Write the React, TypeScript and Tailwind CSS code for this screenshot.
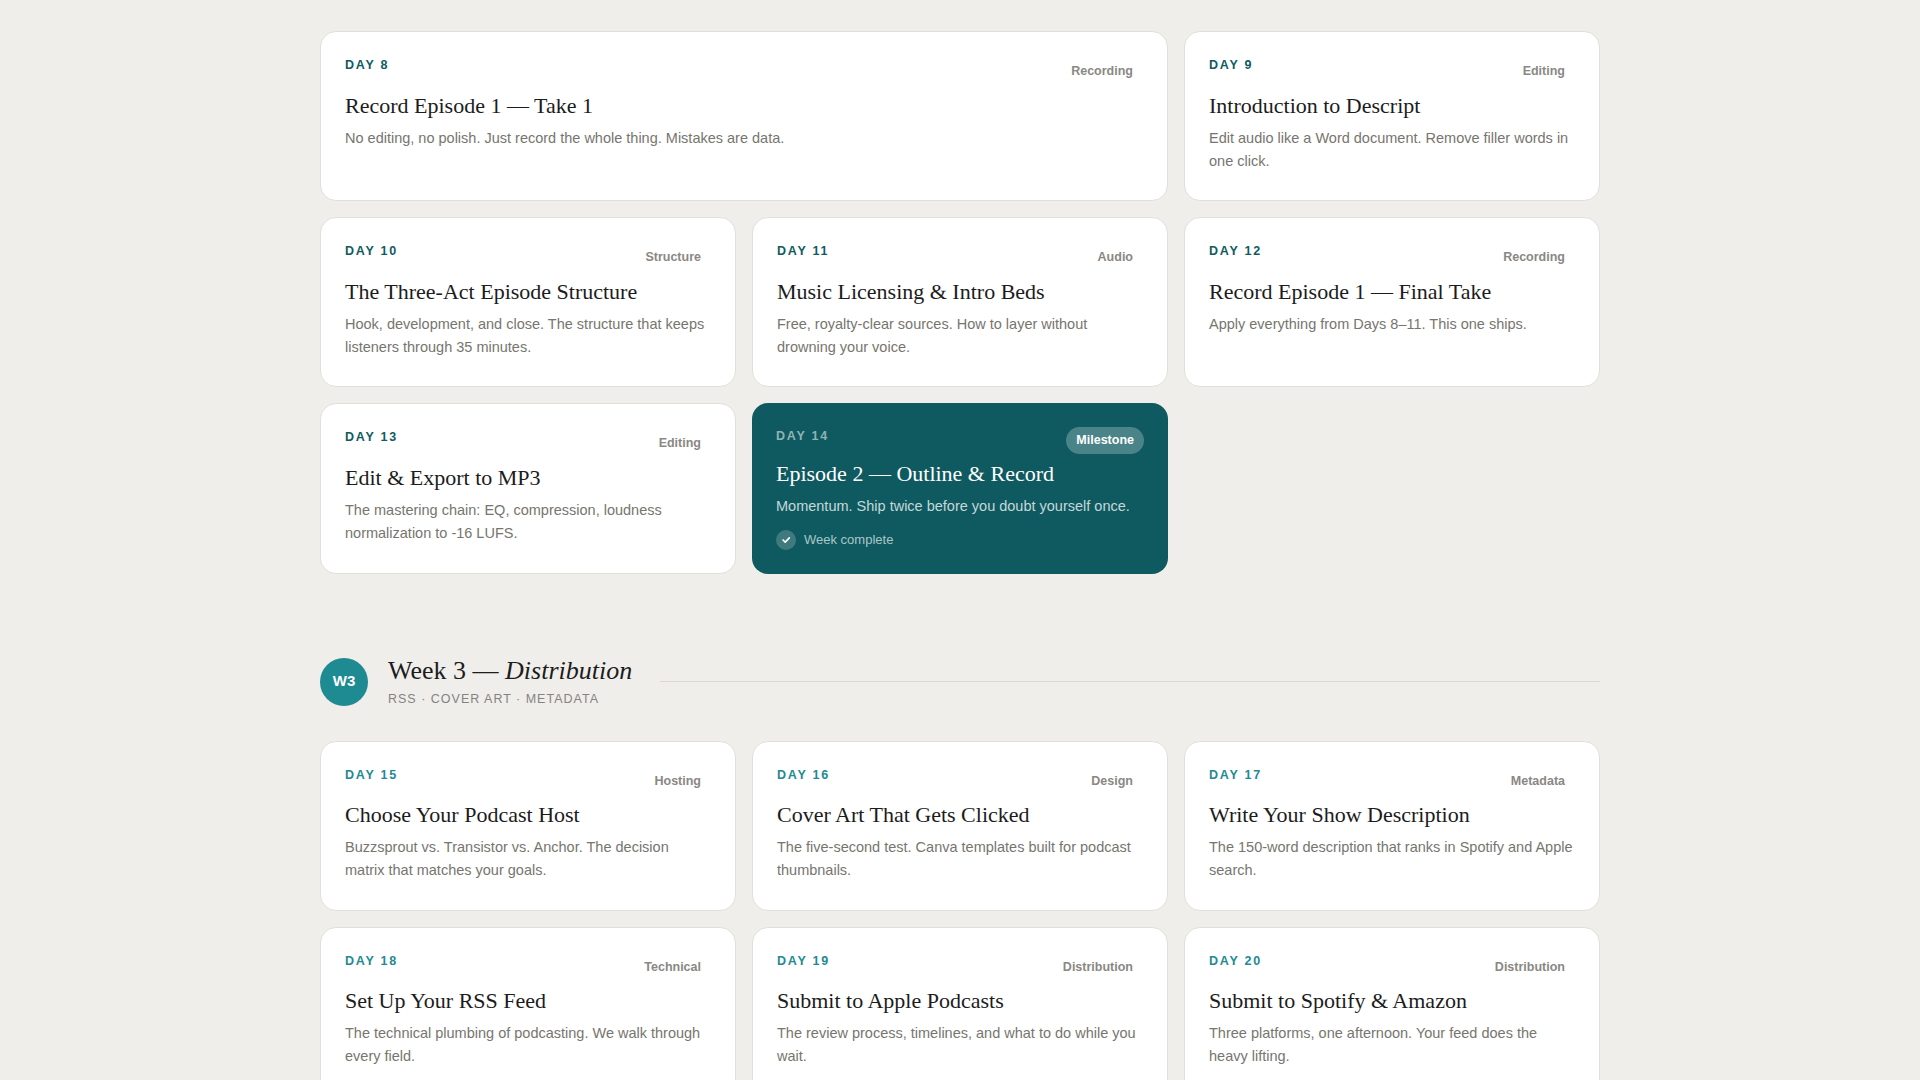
const weekTwo = [
  { day: 8, tag: "Recording", title: "Record Episode 1 — Take 1", desc: "No editing, no polish. Just record the whole thing. Mistakes are data.", wide: true },
  { day: 9, tag: "Editing", title: "Introduction to Descript", desc: "Edit audio like a Word document. Remove filler words in one click." },
  { day: 10, tag: "Structure", title: "The Three-Act Episode Structure", desc: "Hook, development, and close. The structure that keeps listeners through 35 minutes." },
  { day: 11, tag: "Audio", title: "Music Licensing & Intro Beds", desc: "Free, royalty-clear sources. How to layer without drowning your voice." },
  { day: 12, tag: "Recording", title: "Record Episode 1 — Final Take", desc: "Apply everything from Days 8–11. This one ships." },
  { day: 13, tag: "Editing", title: "Edit & Export to MP3", desc: "The mastering chain: EQ, compression, loudness normalization to -16 LUFS." },
]

const weekThree = [
  { day: 15, tag: "Hosting", title: "Choose Your Podcast Host", desc: "Buzzsprout vs. Transistor vs. Anchor. The decision matrix that matches your goals." },
  { day: 16, tag: "Design", title: "Cover Art That Gets Clicked", desc: "The five-second test. Canva templates built for podcast thumbnails." },
  { day: 17, tag: "Metadata", title: "Write Your Show Description", desc: "The 150-word description that ranks in Spotify and Apple search." },
  { day: 18, tag: "Technical", title: "Set Up Your RSS Feed", desc: "The technical plumbing of podcasting. We walk through every field." },
  { day: 19, tag: "Distribution", title: "Submit to Apple Podcasts", desc: "The review process, timelines, and what to do while you wait." },
  { day: 20, tag: "Distribution", title: "Submit to Spotify & Amazon", desc: "Three platforms, one afternoon. Your feed does the heavy lifting." },
]

type Lesson = { day: number; tag: string; title: string; desc: string; wide?: boolean }

function LessonCard({ lesson, labelColor }: { lesson: Lesson; labelColor: string }) {
  return (
    <div
      className={`rounded-2xl border border-[#e2dfda] bg-white p-6 min-h-[170px] ${lesson.wide ? "col-span-2" : ""}`}
    >
      <div className="flex items-start justify-between">
        <span className={`text-[12.5px] font-bold tracking-[0.14em] ${labelColor}`}>DAY {lesson.day}</span>
        <span className="mt-[3px] px-2.5 py-[3px] text-[12.5px] font-semibold text-[#8a8884]">{lesson.tag}</span>
      </div>
      <h3 className="mt-[8px] font-[Liberation_Serif,serif] text-[22px] leading-7 text-[#1c1c1c]">{lesson.title}</h3>
      <p className="mt-[7px] text-[14.5px] leading-[23px] text-[#77756f]">{lesson.desc}</p>
    </div>
  )
}

export default function App() {
  return (
    <div className="min-h-screen bg-[#f0eeeb] font-[Liberation_Sans,Arial,sans-serif]">
      <div className="mx-auto w-[1280px] pt-[31px]">
        <div className="grid grid-cols-3 gap-4">
          {weekTwo.map((l) => (
            <LessonCard key={l.day} lesson={l} labelColor="text-[#0f5b61]" />
          ))}
          <div className="rounded-2xl bg-[#0f5a60] p-6">
            <div className="flex items-start justify-between">
              <span className="text-[12.5px] font-bold tracking-[0.14em] text-[#8fb3b5]">DAY 14</span>
              <span className="rounded-full bg-[#4a8488] px-2.5 py-[4px] text-[12.5px] font-semibold text-white">Milestone</span>
            </div>
            <h3 className="mt-[6px] font-[Liberation_Serif,serif] text-[22px] leading-7 text-white">Episode 2 — Outline & Record</h3>
            <p className="mt-[7px] text-[14.5px] leading-[23px] text-[#c3d8d9]">Momentum. Ship twice before you doubt yourself once.</p>
            <div className="mt-3 flex items-center gap-2">
              <span className="flex h-5 w-5 items-center justify-center rounded-full bg-[#3f7a7e]">
                <svg width="10" height="10" viewBox="0 0 24 24" fill="none" stroke="white" strokeWidth="4" strokeLinecap="round" strokeLinejoin="round">
                  <path d="M5 12l5 5L20 7" />
                </svg>
              </span>
              <span className="text-[13px] text-[#a9c6c8]">Week complete</span>
            </div>
          </div>
        </div>

        <div className="mt-[81px] flex items-center gap-5">
          <div className="flex h-12 w-12 items-center justify-center rounded-full bg-[#1e8a92] text-[15px] font-bold text-white">W3</div>
          <div>
            <div className="font-[Liberation_Serif,serif] text-[26px] leading-8 text-[#1c1c1c]">
              Week 3 — <span className="italic">Distribution</span>
            </div>
            <div className="mt-[3px] text-[12.5px] tracking-[0.08em] text-[#85837e]">RSS · COVER ART · METADATA</div>
          </div>
          <div className="ml-2 h-px flex-1 bg-[#dcd9d4]" />
        </div>

        <div className="mt-[32px] grid grid-cols-3 gap-4 pb-10">
          {weekThree.map((l) => (
            <LessonCard key={l.day} lesson={l} labelColor="text-[#1e8a92]" />
          ))}
        </div>
      </div>
    </div>
  )
}
